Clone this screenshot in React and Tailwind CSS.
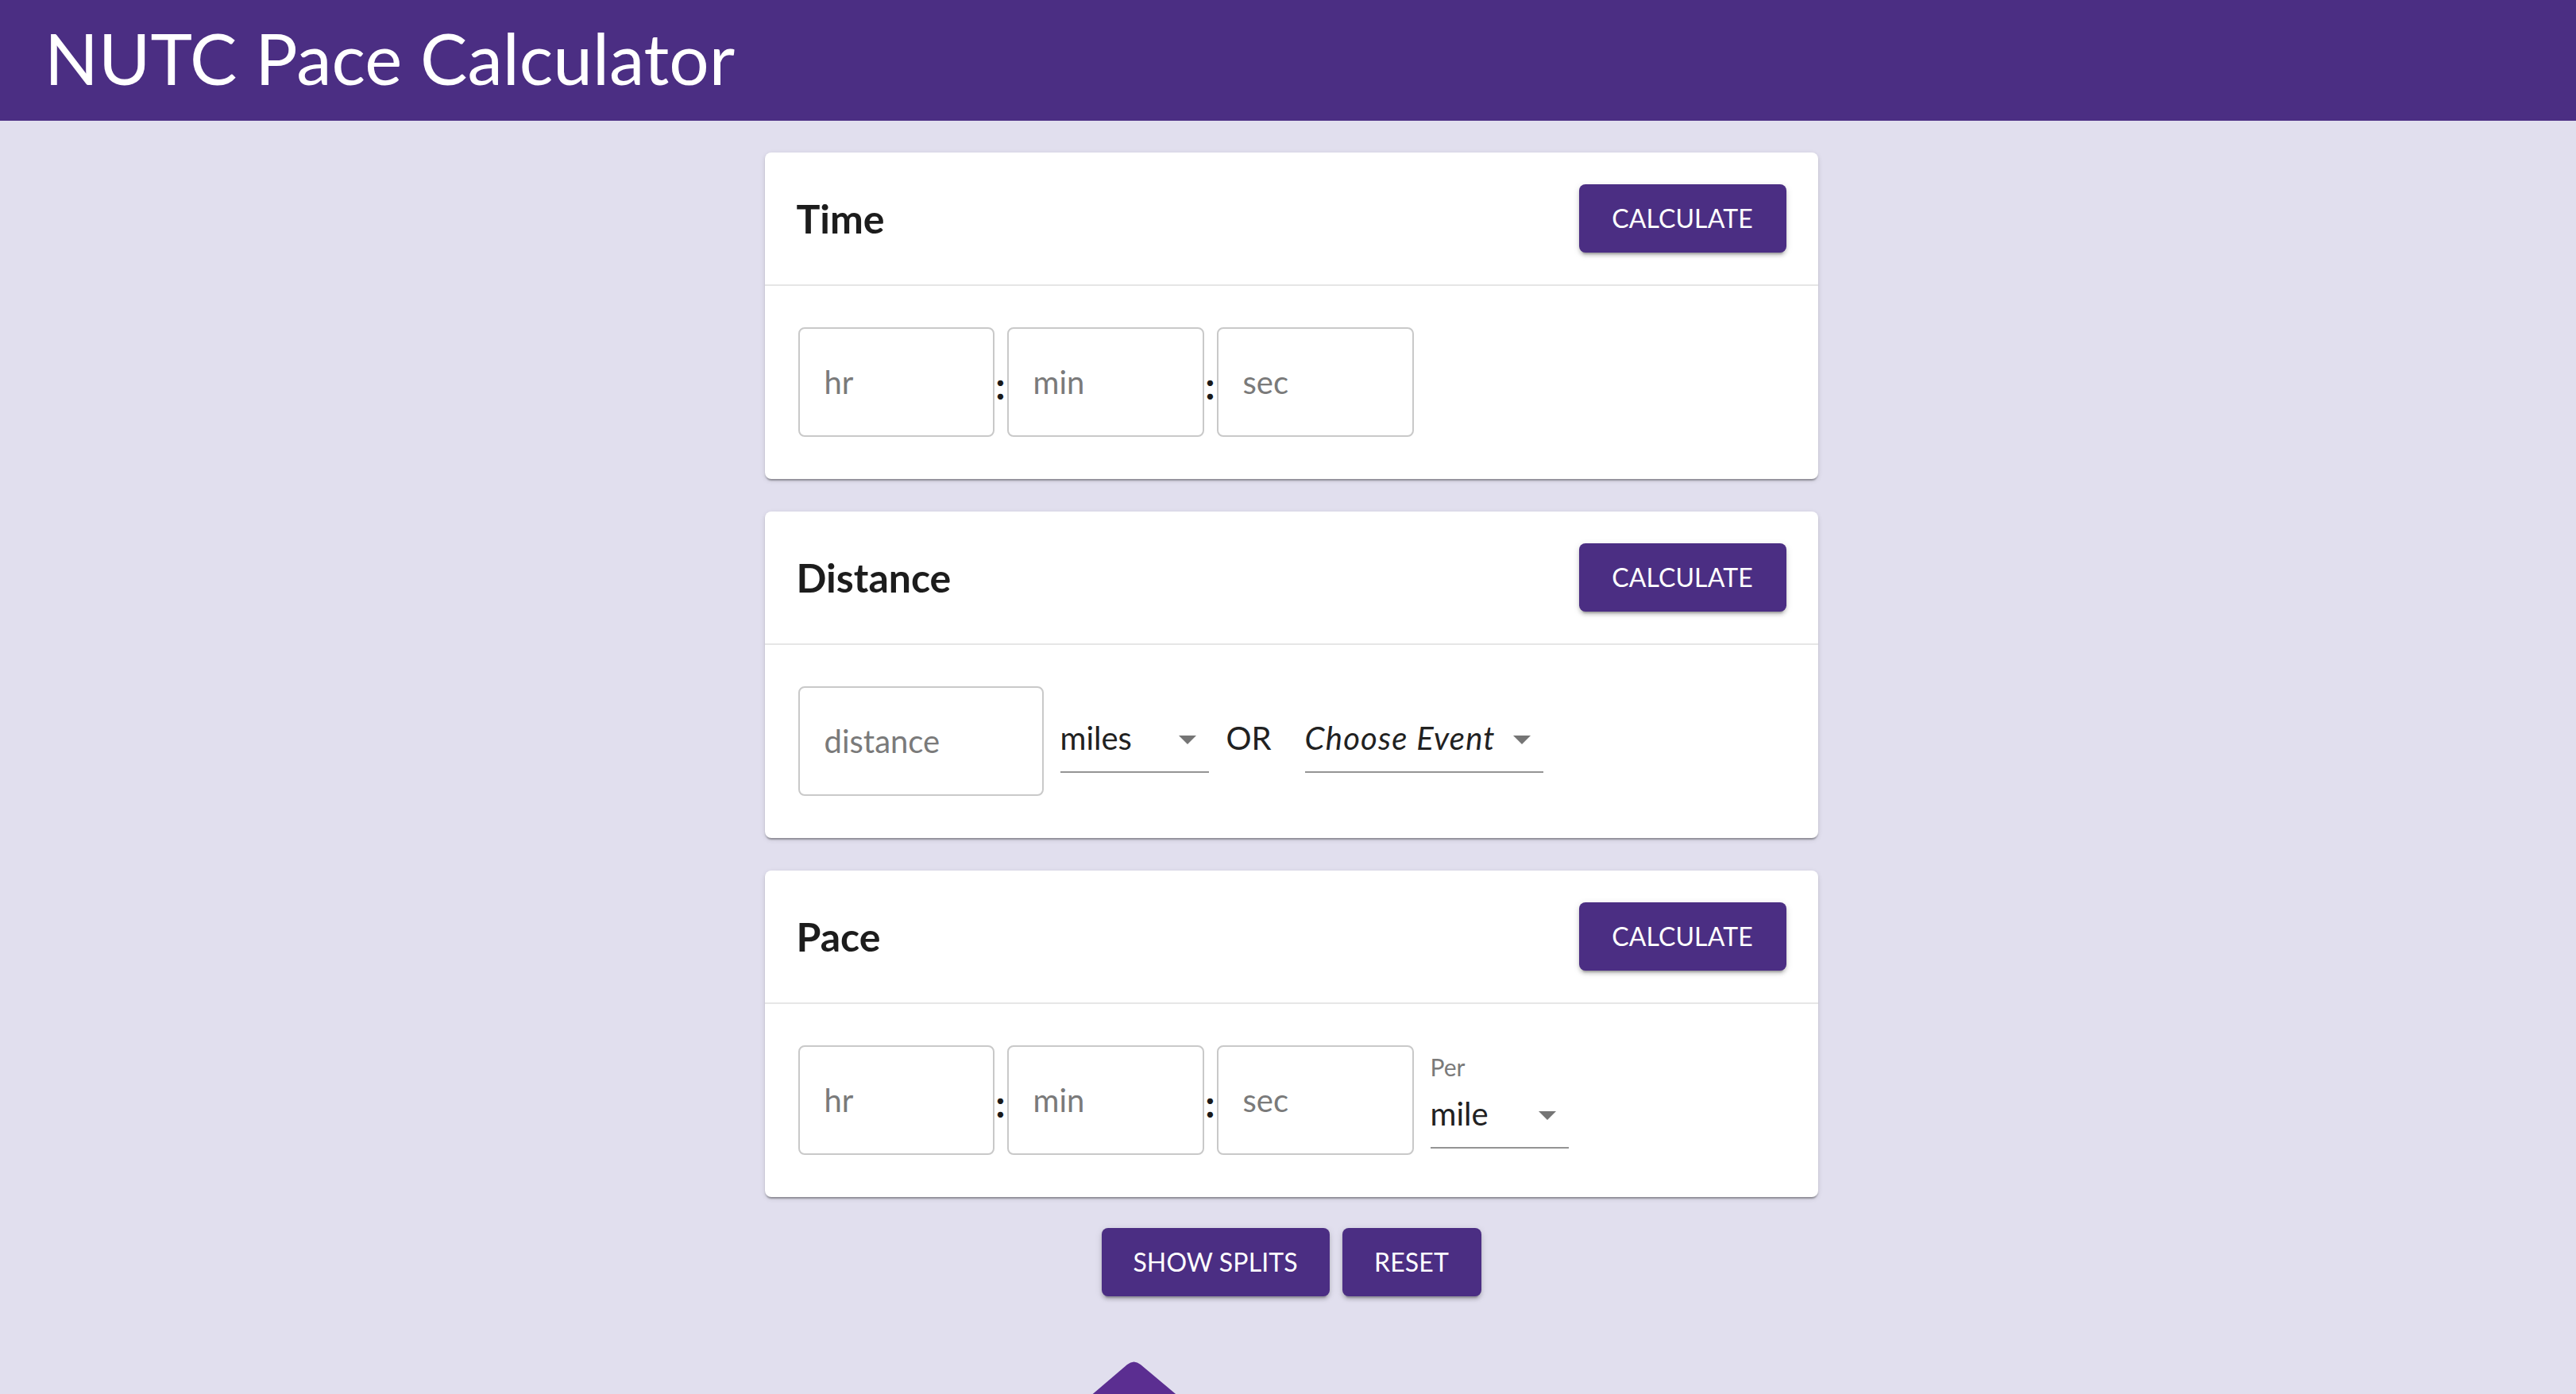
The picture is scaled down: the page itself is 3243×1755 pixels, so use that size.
import React from 'react';

const FONT = { fontFamily: 'Lato, "Noto Sans", "Liberation Sans", sans-serif' };

function ArrowDrop() {
  return (
    <svg width="22" height="11" viewBox="0 0 10 5" className="flex-shrink-0 mt-[6px]">
      <path d="M0 0l5 5 5-5z" fill="#757575" />
    </svg>
  );
}

function Button({ children, className }) {
  return (
    <button
      className={`h-[86px] rounded-[8px] bg-[#4b2e83] text-white text-[32px] tracking-[0.1px] uppercase flex items-center justify-center shadow-[0_6px_2px_-4px_rgba(0,0,0,0.2),0_4px_4px_0_rgba(0,0,0,0.14),0_2px_10px_0_rgba(0,0,0,0.12)] ${className}`}
    >
      {children}
    </button>
  );
}

function Field({ placeholder, className }) {
  return (
    <input
      placeholder={placeholder}
      className={`h-[138px] rounded-[8px] border-2 border-[#c9c9c9] bg-white pl-[31px] text-[40px] text-[#212121] placeholder:text-[#7a7a7a] outline-none ${className}`}
    />
  );
}

function Colon() {
  return (
    <span className="w-[16px] mt-[7px] text-center text-[48px] leading-none font-bold text-[#1a1a1a]">:</span>
  );
}

function Select({ value, italic, className, label }) {
  return (
    <div className={`flex flex-col ${className}`}>
      {label && <span className="text-[30px] leading-[36px] text-[#7a7a7a] mb-[17px]">{label}</span>}
      <div className="flex items-center justify-between pr-[16px] pb-[18px] border-b-2 border-[#949494]">
        <span
          className={`text-[40px] leading-[48px] text-[#212121] ${italic ? 'italic tracking-[1.2px]' : ''}`}
        >
          {value}
        </span>
        <ArrowDrop />
      </div>
    </div>
  );
}

function Card({ title, children }) {
  return (
    <div className="bg-white rounded-[8px] shadow-[0_4px_2px_-2px_rgba(0,0,0,0.2),0_2px_2px_0_rgba(0,0,0,0.14),0_2px_6px_0_rgba(0,0,0,0.12)]">
      {/* header */}
      <div className="flex items-center justify-between px-[40px] py-[40px] border-b-2 border-[#e6e6e6]">
        <h2 className="text-[50px] font-bold text-[#1c1c1c]">{title}</h2>
        <Button className="w-[261px]">Calculate</Button>
      </div>
      {/* body */}
      <div className="flex items-center px-[42px] pt-[52px] pb-[53px]">{children}</div>
    </div>
  );
}

function TimeInputs() {
  return (
    <>
      <Field placeholder="hr" className="w-[247px]" />
      <Colon />
      <Field placeholder="min" className="w-[248px]" />
      <Colon />
      <Field placeholder="sec" className="w-[248px]" />
    </>
  );
}

export default function App() {
  return (
    <div className="h-screen overflow-hidden bg-[#e1dfee]" style={FONT}>
      {/* Title bar */}
      <header className="h-[152px] bg-[#4b2e83] flex items-center px-[56px] pb-[6px]">
        <h1 className="text-[89px] text-white">NUTC Pace Calculator</h1>
      </header>

      <main className="pl-[8px] pt-[40px] flex flex-col items-center">
        <div className="w-[1326px] flex flex-col gap-[41px]">
          <Card title="Time">
            <TimeInputs />
          </Card>

          <Card title="Distance">
            <Field placeholder="distance" className="w-[309px]" />
            <Select value="miles" className="ml-[21px] w-[187px] mt-[11px]" />
            <span className="ml-[22px] mb-[9px] text-[40px] leading-[48px] text-[#212121]">OR</span>
            <Select value="Choose Event" italic className="ml-[42px] w-[300px] mt-[11px]" />
          </Card>

          <Card title="Pace">
            <TimeInputs />
            <Select value="mile" label="Per" className="ml-[21px] w-[174px]" />
          </Card>
        </div>

        <div className="mt-[39px] flex gap-[16px]">
          <Button className="w-[287px]">Show Splits</Button>
          <Button className="w-[175px]">Reset</Button>
        </div>

        <div className="mt-[81px] w-[478px]">
          <svg width="112" height="60" viewBox="0 0 112 60" className="-ml-[15px]">
            <path d="M-8 52L47 5Q55.5-2 64 5L120 52Z" fill="#5b2e91" />
          </svg>
        </div>
      </main>
    </div>
  );
}
